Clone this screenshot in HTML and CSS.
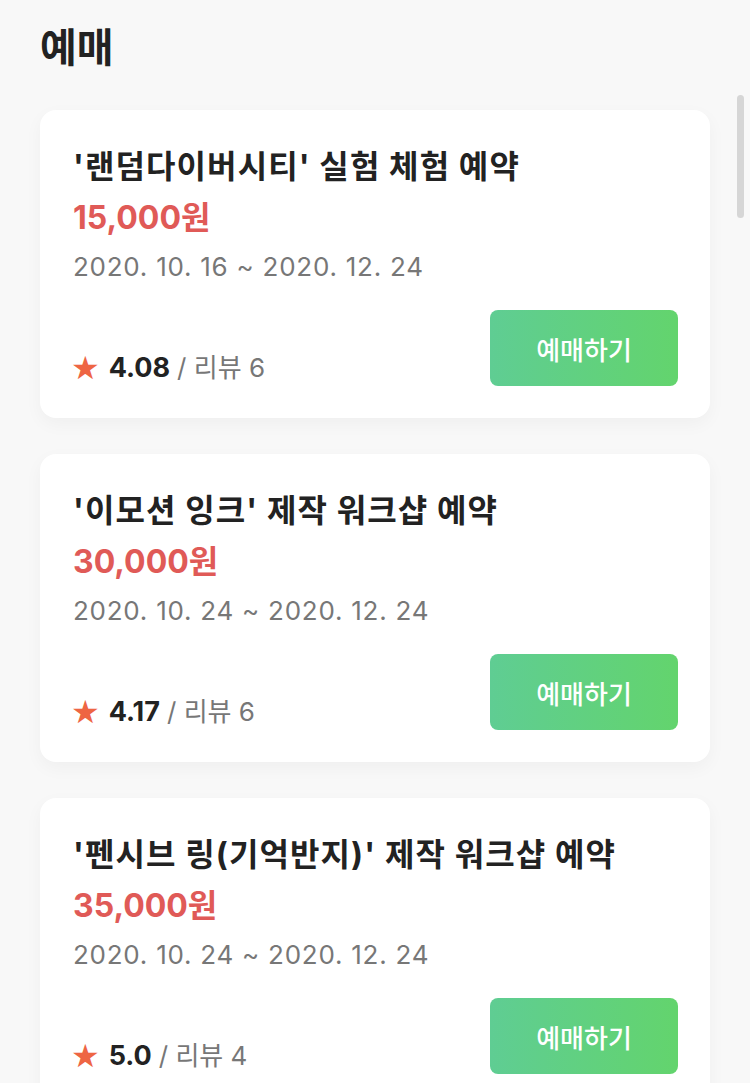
FILE: index.html
```html
<!DOCTYPE html>
<html lang="ko">
<head>
<meta charset="utf-8">
<link rel="stylesheet" href="styles.css">
</head>
<body>
<div class="page">
  <h1 class="page-title">예매</h1>
  <div class="list">
    <div class="card">
      <div class="card-title">'랜덤다이버시티' 실험 체험 예약</div>
      <div class="price">15,000원</div>
      <div class="date">2020. 10. 16 ~ 2020. 12. 24</div>
      <div class="bottom">
        <div class="rating"><span class="star">★</span><b>4.08</b> / 리뷰 6</div>
        <button class="btn">예매하기</button>
      </div>
    </div>
    <div class="card">
      <div class="card-title">'이모션 잉크' 제작 워크샵 예약</div>
      <div class="price">30,000원</div>
      <div class="date">2020. 10. 24 ~ 2020. 12. 24</div>
      <div class="bottom">
        <div class="rating"><span class="star">★</span><b>4.17</b> / 리뷰 6</div>
        <button class="btn">예매하기</button>
      </div>
    </div>
    <div class="card">
      <div class="card-title">'펜시브 링(기억반지)' 제작 워크샵 예약</div>
      <div class="price">35,000원</div>
      <div class="date">2020. 10. 24 ~ 2020. 12. 24</div>
      <div class="bottom">
        <div class="rating"><span class="star">★</span><b>5.0</b> / 리뷰 4</div>
        <button class="btn">예매하기</button>
      </div>
    </div>
  </div>
</div>
<div class="scrollbar"></div>
</body>
</html>
```
FILE: styles.css
```css
html, body {
  margin: 0;
  padding: 0;
  background: #f8f8f8;
  font-family: Inter, "Noto Sans CJK KR", sans-serif;
  color: #222;
  height: 1083px;
  overflow: hidden;
}
.page {
  padding: 20px 40px 0 40px;
}
.page-title {
  margin: 0 0 40px 0;
  font-family: "Noto Sans CJK KR", sans-serif;
  font-size: 40px;
  line-height: 50px;
  font-weight: 700;
  color: #222;
}
.list {
  display: flex;
  flex-direction: column;
  gap: 36px;
}
.card {
  background: #fff;
  border-radius: 16px;
  box-shadow: 0 6px 18px rgba(0,0,0,0.04);
  padding: 37px 32px 32px 33px;
  display: flex;
  flex-direction: column;
}
.card-title {
  font-size: 32px;
  line-height: 40px;
  font-weight: 700;
  color: #222;
  letter-spacing: 1.1px;
}
.price {
  margin-top: 11px;
  font-size: 32px;
  line-height: 40px;
  font-weight: 700;
  color: #e05a57;
}
.date {
  margin-top: 11px;
  font-size: 26px;
  line-height: 36px;
  color: #777;
  letter-spacing: 0.75px;
}
.bottom {
  margin-top: 25px;
  display: flex;
  justify-content: space-between;
  align-items: flex-end;
}
.rating {
  font-size: 26px;
  line-height: 36px;
  color: #777;
  display: flex;
  align-items: center;
}
.rating b {
  color: #222;
  font-weight: 700;
  font-size: 27px;
  margin-right: 7px;
}
.star {
  color: #ee6543;
  font-size: 32px;
  margin-left: -2px;
  margin-right: 9px;
  font-family: "DejaVu Sans", sans-serif;
}
.btn {
  width: 188px;
  height: 76px;
  border: none;
  border-radius: 8px;
  background: linear-gradient(90deg, #5fcd93, #63d46d);
  color: #fff;
  font-family: "Noto Sans CJK KR", sans-serif;
  font-size: 26px;
  font-weight: 500;
  padding: 0;
}
.scrollbar {
  position: fixed;
  left: 737px;
  top: 95px;
  width: 7px;
  height: 123px;
  border-radius: 4px;
  background: #d6d6d6;
}
```
